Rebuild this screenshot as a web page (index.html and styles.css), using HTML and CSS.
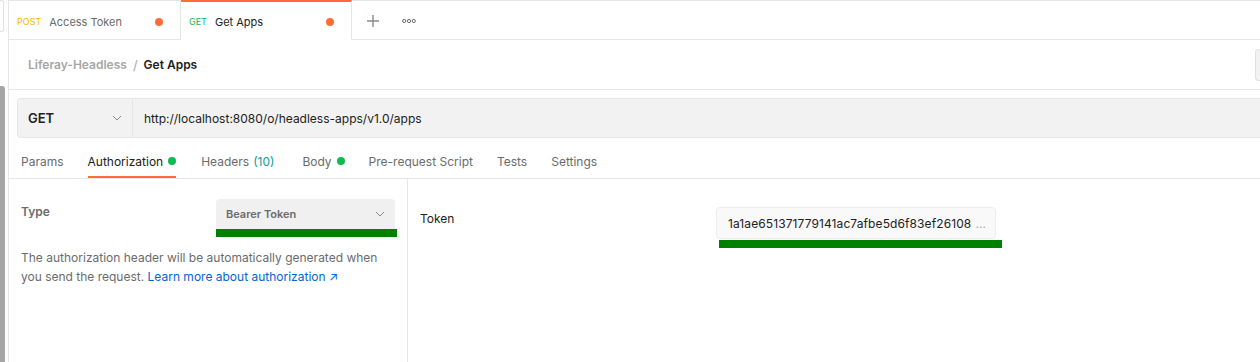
FILE: index.html
```html
<!DOCTYPE html>
<html lang="en">
<head>
    <meta charset="UTF-8">
    <title>Get Apps</title>
    <link rel="stylesheet" href="styles.css">
</head>
<body>

<div class="app">
  <div class="sidebar">
    <div class="side-box"></div>
    <div class="scroll"></div>
  </div>

  <div class="main">
    <div class="tabs">
      <div class="tab">
        <span class="method post">POST</span>
        <span class="tab-name">Access Token</span>
        <span class="dot"></span>
      </div>
      <div class="tab active">
        <span class="method get">GET</span>
        <span class="tab-name">Get Apps</span>
        <span class="dot"></span>
      </div>
      <div class="tab-tools">
        <svg width="14" height="14" viewBox="0 0 14 14"><path d="M7 1v12M1 7h12" stroke="#8a8a8a" stroke-width="1.4"/></svg>
        <svg width="14" height="6" viewBox="0 0 14 6"><circle cx="2.2" cy="3" r="1.6" fill="none" stroke="#6b6b6b" stroke-width="1"/><circle cx="7" cy="3" r="1.6" fill="none" stroke="#6b6b6b" stroke-width="1"/><circle cx="11.8" cy="3" r="1.6" fill="none" stroke="#6b6b6b" stroke-width="1"/></svg>
      </div>
    </div>

    <div class="crumbs">
      <span class="crumb-parent">Liferay-Headless</span>
      <span class="crumb-sep">/</span>
      <span class="crumb-current">Get Apps</span>
      <span class="crumb-btn"></span>
    </div>

    <div class="url-bar">
      <div class="method-select">
        <span>GET</span>
        <svg width="10" height="6" viewBox="0 0 10 6"><path d="M1 1l4 4 4-4" fill="none" stroke="#8a8a8a" stroke-width="1"/></svg>
      </div>
      <div class="url">http://localhost:8080/o/headless-apps/v1.0/apps</div>
    </div>

    <div class="sub-tabs">
      <span class="sub-tab">Params</span>
      <span class="sub-tab active">Authorization <i class="ok"></i></span>
      <span class="sub-tab headers">Headers <em>(10)</em></span>
      <span class="sub-tab">Body <i class="ok"></i></span>
      <span class="sub-tab">Pre-request Script</span>
      <span class="sub-tab">Tests</span>
      <span class="sub-tab">Settings</span>
    </div>

    <div class="auth">
      <div class="auth-left">
        <div class="type-row">
          <span class="type-label">Type</span>
          <div class="type-field">
            <div class="type-select">
              <span>Bearer Token</span>
              <svg width="10" height="6" viewBox="0 0 10 6"><path d="M1 1l4 4 4-4" fill="none" stroke="#8a8a8a" stroke-width="1"/></svg>
            </div>
            <div class="mark"></div>
          </div>
        </div>
        <p class="hint">The authorization header will be automatically generated when you send the request. <a href="#">Learn more about authorization&nbsp;&#8599;</a></p>
      </div>

      <div class="auth-right">
        <span class="token-label">Token</span>
        <div class="token-field">
          <div class="token-input">1a1ae651371779141ac7afbe5d6f83ef26108<span class="more">...</span></div>
          <div class="mark"></div>
        </div>
      </div>
    </div>
  </div>
</div>

</body>
</html>
```

FILE: styles.css
```css
body {
  margin: 0;
  font-family: Inter, "Open Sans", sans-serif;
  background: #fff;
  color: #212121;
}

.app {
  display: flex;
  height: 362px;
  overflow: hidden;
}

.sidebar {
  width: 8px;
  border-right: 1px solid #e6e6e6;
  display: flex;
  flex-direction: column;
}

.side-box {
  height: 30px;
  width: 3px;
  border: 1px solid #e0e0e0;
  border-left: none;
  border-radius: 0 3px 3px 0;
}

.scroll {
  margin-top: 54px;
  width: 5px;
  flex: 1;
  background: #a6a6a6;
  border-radius: 0 3px 0 0;
}

.main {
  flex: 1;
  min-width: 0;
}

/* tabs */
.tabs {
  display: flex;
  height: 40px;
  box-sizing: border-box;
  border-top: 1px solid #e6e6e6;
}

.tab {
  display: flex;
  align-items: center;
  box-sizing: border-box;
  width: 172px;
  padding: 3px 17px 0 8px;
  border-right: 1px solid #e6e6e6;
  border-bottom: 1px solid #e6e6e6;
  font-size: 11px;
  color: #6b6b6b;
}

.tab.active {
  width: 171px;
  padding-top: 2px;
  border-bottom-color: transparent;
  border-top: 2px solid #ff6c37;
  margin-top: -1px;
  color: #212121;
}

.method {
  font-size: 9px;
  margin-right: 8px;
}

.post { color: #ffb400; }
.get { color: #0cbb52; }

.tab-name { flex: 1; }

.dot {
  width: 8px;
  height: 8px;
  border-radius: 50%;
  background: #ff6c37;
}

.tab-tools {
  flex: 1;
  display: flex;
  align-items: center;
  gap: 22px;
  padding: 2px 0 0 14px;
  border-bottom: 1px solid #e6e6e6;
}

/* breadcrumb */
.crumbs {
  display: flex;
  align-items: center;
  height: 49px;
  padding-left: 19px;
  border-bottom: 1px solid #e6e6e6;
  font-size: 12px;
  font-weight: 600;
}

.crumb-parent { color: #a6a6a6; }
.crumb-sep { color: #a6a6a6; margin: 0 6px; font-weight: 400; font-size: 13px; }
.crumb-current { color: #212121; flex: 1; }

.crumb-btn {
  width: 4px;
  height: 30px;
  border: 1px solid #e0e0e0;
  border-right: none;
  border-radius: 4px 0 0 4px;
  background: #f2f2f2;
}

/* url bar */
.url-bar {
  display: flex;
  height: 40px;
  box-sizing: border-box;
  margin: 8px 0 0 8px;
  background: #f2f2f2;
  border: 1px solid #e6e6e6;
  border-right: none;
  border-radius: 4px 0 0 4px;
  font-size: 12px;
}

.method-select {
  display: flex;
  align-items: center;
  justify-content: space-between;
  width: 115px;
  box-sizing: border-box;
  padding: 0 10px 0 10px;
  border-right: 1px solid #e6e6e6;
  font-weight: 600;
  font-size: 13px;
}

.url {
  display: flex;
  align-items: center;
  padding-left: 11px;
}

/* request tabs */
.sub-tabs {
  display: flex;
  gap: 24px;
  height: 41px;
  box-sizing: border-box;
  padding-left: 12px;
  border-bottom: 1px solid #e6e6e6;
  font-size: 12px;
}

.sub-tab {
  display: flex;
  align-items: center;
  gap: 5px;
  color: #6b6b6b;
  padding-top: 8px;
  border-bottom: 2px solid transparent;
}

.sub-tab.active {
  color: #212121;
  border-bottom-color: #ff6c37;
}

.sub-tab.headers {
  margin: 0 4px 0 1px;
}

.sub-tab em {
  font-style: normal;
  color: #0a9c94;
  margin-left: -1px;
}

.ok {
  width: 8px;
  height: 8px;
  border-radius: 50%;
  background: #0cbb52;
}

/* auth panel */
.auth {
  display: flex;
  height: 184px;
}

.auth-left {
  width: 399px;
  box-sizing: border-box;
  padding: 20px 12px 0 12px;
  border-right: 1px solid #e6e6e6;
}

.type-row {
  display: flex;
  justify-content: space-between;
}

.type-label {
  font-size: 12px;
  font-weight: 600;
  color: #6b6b6b;
  margin-top: 5px;
}

.type-field {
  width: 181px;
  margin-right: -2px;
}

.type-select {
  display: flex;
  align-items: center;
  justify-content: space-between;
  width: 179px;
  height: 30px;
  box-sizing: border-box;
  padding: 0 10px;
  background: #f0f0f0;
  border-radius: 4px 4px 0 0;
  font-size: 11px;
  font-weight: 600;
  color: #6b6b6b;
}

.mark {
  height: 8px;
  background: #008000;
}

.hint {
  margin: 11px 0 0;
  font-size: 12px;
  line-height: 19px;
  color: #6b6b6b;
}

.hint a {
  color: #0265d2;
  text-decoration: none;
}

.auth-right {
  flex: 1;
  display: flex;
  padding: 28px 0 0 12px;
}

.token-label {
  width: 296px;
  font-size: 12px;
  margin-top: 4px;
}

.token-field {
  width: 286px;
}

.token-input {
  width: 280px;
  height: 32px;
  box-sizing: border-box;
  padding: 0 11px;
  display: flex;
  align-items: center;
  background: #f9f9f9;
  border: 1px solid #ededed;
  border-radius: 4px;
  font-size: 12px;
  letter-spacing: 0.1px;
  white-space: nowrap;
  overflow: hidden;
}

.token-input .more {
  color: #a6a6a6;
  margin-left: 4px;
}

.token-field .mark {
  margin: 1px 0 0 3px;
  width: 283px;
}
```
